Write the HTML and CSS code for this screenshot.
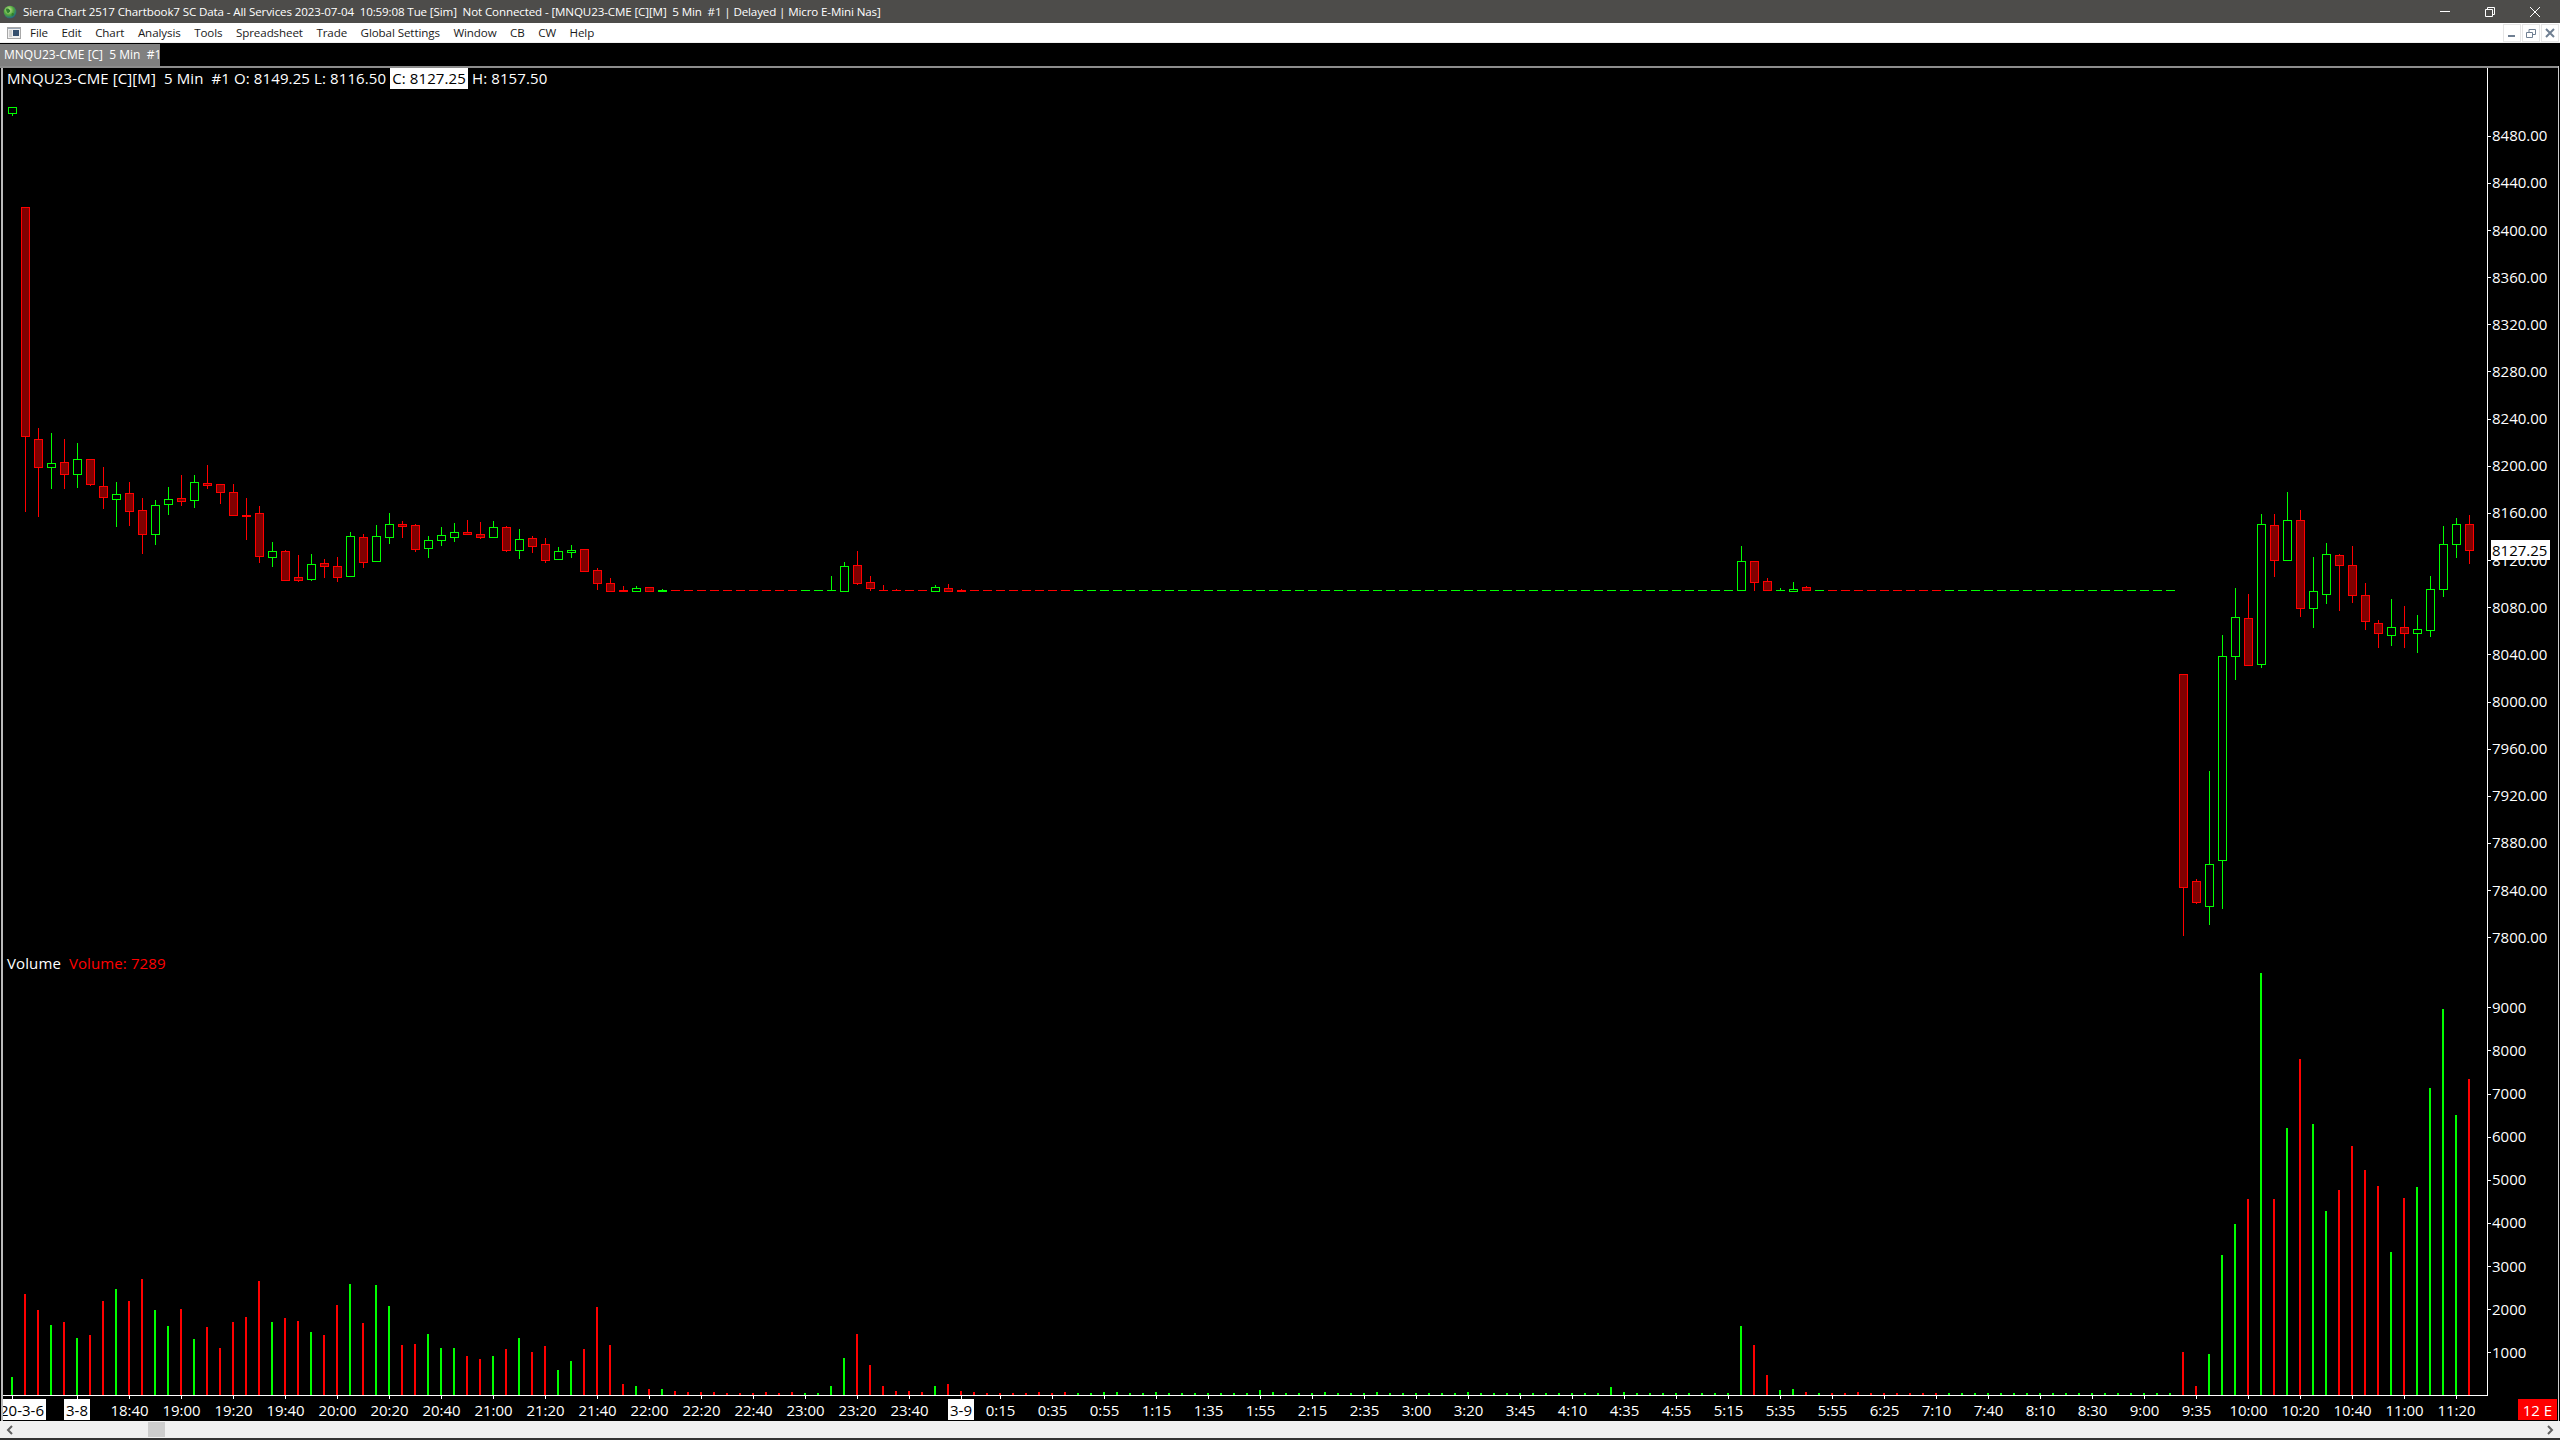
FILE: index.html
```html
<!DOCTYPE html>
<html lang="en">
<head>
<meta charset="utf-8">
<title>Sierra Chart</title>
<link rel="stylesheet" href="styles.css">
</head>
<body>
<div class="app">
  <header class="titlebar">
    <svg class="app-icon" viewBox="0 0 14 14" width="14" height="14"><defs><radialGradient id="globe" cx="40%" cy="35%" r="70%"><stop offset="0" stop-color="#d8f0a0"/><stop offset=".55" stop-color="#4fa53c"/><stop offset="1" stop-color="#1d5f8f"/></radialGradient></defs><circle cx="7" cy="7" r="6.3" fill="url(#globe)"/><path d="M3 4c2-1 3 0 4 1s-1 3-2 3-2-2-2-4zM9 8c1 0 2 0 2 1s-1 2-2 2 0-3 0-3z" fill="#2f7f2f"/></svg>
    <span class="title-text">Sierra Chart 2517 Chartbook7 SC Data - All Services 2023-07-04  10:59:08 Tue [Sim]  Not Connected - [MNQU23-CME [C][M]  5 Min  #1 | Delayed | Micro E-Mini Nas]</span>
    <div class="win-buttons">
      <svg class="win-btn" viewBox="0 0 12 12" width="12" height="12"><path d="M1 5.5h10" /></svg>
      <svg class="win-btn" viewBox="0 0 12 12" width="12" height="12"><path d="M1.5 3.5h7v7h-7zM3.5 3.500v-2h7v7h-2" /></svg>
      <svg class="win-btn" viewBox="0 0 12 12" width="12" height="12"><path d="M1 1l10 10M11 1L1 11" /></svg>
    </div>
  </header>
  <nav class="menubar">
    <svg class="doc-icon" viewBox="0 0 14 12" width="14" height="12"><rect x=".5" y=".5" width="13" height="11" fill="#f0f0f0" stroke="#a8a8a8"/><rect x="1" y="1" width="12" height="1" fill="#9aa6b4"/><rect x="6" y="3" width="6" height="6" fill="#36506e"/><rect x="2" y="3" width="3" height="7" fill="#d0d0d0"/></svg>
    <ul class="menu">
      <li>File</li><li>Edit</li><li>Chart</li><li>Analysis</li><li>Tools</li><li>Spreadsheet</li><li>Trade</li><li>Global Settings</li><li>Window</li><li>CB</li><li>CW</li><li>Help</li>
    </ul>
    <div class="mdi-buttons">
      <button class="mdi-btn"><svg viewBox="0 0 12 12" width="12" height="12"><path d="M2 8h7v2H2z"/></svg></button>
      <button class="mdi-btn"><svg viewBox="0 0 12 12" width="12" height="12"><path class="mdi-line" d="M1.500 5.500h6v5h-6zM4 5V2.500h6.500v5H8"/></svg></button>
      <button class="mdi-btn"><svg viewBox="0 0 12 12" width="12" height="12"><path class="mdi-x" d="M2 2l8 8M10 2l-8 8"/></svg></button>
    </div>
  </nav>
  <div class="tabbar">
    <div class="tab">MNQU23-CME [C]  5 Min  #1</div>
  </div>
  <main class="chart">
    <svg id="plot" class="plot" viewBox="0 66 2560 1355" width="2560" height="1355" preserveAspectRatio="none"></svg>
    <div class="legend legend-price">MNQU23-CME [C][M]  5 Min  #1 O: 8149.25 L: 8116.50 <span class="hl">C: 8127.25</span> H: 8157.50</div>
    <div class="legend legend-volume">Volume  <span class="red">Volume: 7289</span></div>
  </main>
  <div class="scrollbar">
    <svg class="arrow" viewBox="0 0 8 10" width="8" height="10"><path d="M6 1L2 5l4 4"/></svg>
    <div class="track"><div class="thumb"></div></div>
    <svg class="arrow" viewBox="0 0 8 10" width="8" height="10"><path d="M2 1l4 4-4 4"/></svg>
  </div>
  <div class="bottom-edge"></div>
</div>
<script src="chart.js"></script>
</body>
</html>
```

FILE: styles.css
```css
* { box-sizing: border-box; }
html, body { margin: 0; padding: 0; background: #000; }
body { font-family: "Open Sans", "Noto Sans", sans-serif; overflow: hidden; }
.app { width: 2560px; height: 1440px; display: flex; flex-direction: column; }

.titlebar { height: 23px; background: #4d4c4a; color: #fff; display: flex; align-items: center; padding-left: 3px; font-size: 11.6px; }
.app-icon { flex: none; margin-right: 6px; }
.title-text { white-space: pre; letter-spacing: -0.13px; }
.win-buttons { margin-left: auto; display: flex; gap: 33px; padding-right: 19px; }
.win-btn { fill: none; stroke: #fff; stroke-width: 1; }

.menubar { height: 20px; background: #fff; border-bottom: 1px solid #f0f0f0; display: flex; align-items: center; padding-left: 7px; color: #1a1a1a; font-size: 11.6px; letter-spacing: -0.1px; }
.doc-icon { flex: none; margin-right: 9px; }
.menu { list-style: none; margin: 0; padding: 0; display: flex; gap: 13.5px; }
.mdi-buttons { margin-left: auto; display: flex; gap: 1px; padding-right: 1px; }
.mdi-btn { width: 18px; height: 18px; padding: 0; background: #fff; border: 1px solid #e6e6e6; display: flex; align-items: center; justify-content: center; fill: #6f7f92; }
.mdi-line { fill: none; stroke: #6f7f92; stroke-width: 1; }
.mdi-x { fill: none; stroke: #6f7f92; stroke-width: 2; }

.tabbar { height: 23px; background: #000; padding-top: 1px; }
.tab { width: 160px; height: 22px; background: #808080; color: #fff; font-size: 12px; line-height: 22px; padding-left: 4px; white-space: pre; }

.chart { position: relative; flex: 1; background: #000; overflow: hidden; }
.plot { display: block; }
.legend { position: absolute; left: 7px; color: #fff; font-size: 15px; line-height: 21px; white-space: pre; letter-spacing: 0.11px; }
.legend-price { top: 2px; }
.legend-volume { top: 887px; }
.hl { background: #fff; color: #000; padding: 0 2px; display: inline-block; }
.red { color: #f00; }

.scrollbar { height: 17px; background: #f0f0f0; display: flex; align-items: center; padding: 0 6px; }
.arrow { flex: none; fill: none; stroke: #606060; stroke-width: 2; }
.track { flex: 1; height: 15px; padding-left: 134px; }
.thumb { width: 17px; height: 15px; background: #cdcdcd; }
.bottom-edge { height: 2px; background: #333; }

.frame { fill: #bbb; }
.frame-top { fill: #8c8c8c; }
.frame-right { fill: #ccc; }
.mask { fill: #000; }
.axis { fill: #fff; }
.wick-up, .flat-up { fill: #0f0; }
.wick-down, .flat-down { fill: #f00; }
.body-up { fill: #000; stroke: #0f0; }
.body-down { fill: #800000; stroke: #f00; }
.vol-up { fill: #0f0; }
.vol-down { fill: #f00; }
.plot text { font-family: "Open Sans", "Noto Sans", sans-serif; font-size: 15px; fill: #fff; dominant-baseline: central; }
.plot text.on-white { fill: #000; }
.label-bg { fill: #fff; }
.alert-bg { fill: #f00; }
.plot rect, .plot line { shape-rendering: crispEdges; }
```

FILE: chart.js
```js
// Geometry of the chart, in page pixels
var BAR0 = 12, STEP = 13, AXIS_X = 2487, AXIS_Y = 1395, FLAT = 590;
var NS = 'http://www.w3.org/2000/svg';
var svg = document.getElementById('plot');

function el(name, attrs, text) {
  var n = document.createElementNS(NS, name);
  for (var k in attrs) n.setAttribute(k, attrs[k]);
  if (text !== undefined) n.textContent = text;
  svg.appendChild(n);
  return n;
}
function rect(cls, x, y, w, h) { el('rect', { 'class': cls, x: x, y: y, width: w, height: h }); }
function barX(i) { return BAR0 + STEP * i; }

// Candles: colour, wick top, body top, body bottom, wick bottom; values are measured at 3x from base
var candles = {};
function addCandles(start, base, rows) {
  rows.forEach(function (r, n) {
    candles[start + n] = { c: r[0], v: [r[1], r[2], r[3], r[4]].map(function (p) { return Math.round(base + p / 3); }) };
  });
}
function addFlat(from, to, c) {
  for (var i = from; i <= to; i++) candles[i] = { c: c, v: [FLAT, FLAT, FLAT, FLAT] };
}
addCandles(0, 0, [['g', 321, 321, 339, 345]]);
addCandles(1, 190, [
  ['r', 52, 52, 737, 963], ['r', 714, 748, 832, 978], ['g', 729, 820, 832, 894], ['r', 747, 817, 851, 894],
  ['g', 759, 808, 851, 891], ['r', 808, 808, 881, 885], ['r', 831, 889, 920, 954], ['g', 876, 913, 926, 1008],
  ['r', 876, 910, 962, 1005], ['r', 924, 961, 1031, 1088], ['g', 930, 946, 1031, 1062], ['g', 891, 928, 943, 972],
  ['r', 855, 925, 932, 945], ['g', 855, 877, 929, 951], ['r', 825, 880, 884, 894], ['r', 883, 883, 905, 939],
  ['r', 882, 907, 976, 976], ['r', 924, 975, 977, 1047]
]);
addCandles(19, 500, [
  ['r', 18, 40, 167, 186], ['g', 126, 154, 170, 198], ['r', 150, 154, 239, 239], ['r', 165, 232, 239, 243],
  ['g', 162, 193, 236, 240], ['r', 177, 190, 197, 231]
]);
addCandles(25, 480, [
  ['r', 231, 259, 290, 302], ['g', 156, 169, 287, 287], ['r', 163, 172, 245, 261], ['g', 135, 169, 242, 242],
  ['g', 99, 133, 170, 189], ['r', 123, 132, 137, 171], ['r', 132, 136, 206, 213], ['g', 168, 181, 203, 231],
  ['g', 141, 166, 181, 195], ['g', 129, 157, 170, 183], ['r', 120, 157, 163, 163], ['r', 126, 163, 170, 174],
  ['g', 123, 142, 170, 170], ['r', 138, 142, 209, 213], ['g', 147, 178, 209, 234], ['r', 168, 175, 197, 216],
  ['r', 174, 193, 239, 246], ['g', 201, 214, 236, 236], ['g', 195, 211, 215, 231], ['r', 208, 208, 272, 272],
  ['r', 264, 271, 308, 327], ['r', 294, 310, 332, 332], ['r', 318, 330, 332, 332], ['g', 318, 325, 332, 332],
  ['r', 322, 322, 332, 332], ['g', 327, 330, 332, 332]
]);
addFlat(51, 60, 'r');
addFlat(61, 62, 'g');
addCandles(63, 500, [
  ['g', 228, 271, 271, 271], ['g', 186, 199, 272, 272], ['r', 153, 196, 248, 252], ['r', 228, 247, 263, 270],
  ['r', 255, 271, 271, 271], ['r', 268, 271, 271, 271], ['r', 271, 271, 271, 271], ['r', 271, 271, 271, 271],
  ['g', 255, 262, 272, 272], ['r', 252, 265, 272, 272], ['r', 267, 270, 272, 272]
]);
addFlat(74, 81, 'r');
addFlat(82, 132, 'g');
addCandles(133, 530, [
  ['g', 48, 94, 181, 181], ['r', 94, 94, 155, 180], ['r', 144, 154, 181, 181],
  ['g', 174, 181, 181, 181], ['g', 156, 177, 182, 182], ['r', 168, 172, 181, 181]
]);
addFlat(139, 139, 'g');
addFlat(140, 148, 'r');
addFlat(149, 166, 'g');
addCandles(167, 480, [
  ['r', 583, 583, 1220, 1365], ['r', 1197, 1204, 1265, 1268], ['g', 873, 1153, 1279, 1332], ['g', 465, 529, 1141, 1284],
  ['g', 324, 412, 529, 597], ['r', 342, 415, 556, 556], ['g', 102, 133, 553, 560], ['r', 102, 136, 241, 288],
  ['g', 36, 121, 241, 241], ['r', 90, 121, 385, 408], ['g', 231, 334, 385, 441], ['g', 189, 223, 343, 369],
  ['r', 222, 226, 256, 390], ['r', 198, 256, 346, 366], ['r', 309, 346, 424, 447], ['r', 420, 430, 460, 501],
  ['g', 357, 442, 466, 495], ['r', 378, 442, 460, 501], ['g', 405, 448, 460, 516], ['g', 288, 328, 451, 468],
  ['g', 138, 193, 328, 348], ['g', 114, 133, 193, 231], ['r', 105, 133, 211, 249]
]);

Object.keys(candles).forEach(function (k) {
  var i = +k, d = candles[k], x = barX(i), up = d.c === 'g', v = d.v;
  if (v[0] < v[3]) rect(up ? 'wick-up' : 'wick-down', x, v[0], 1, v[3] - v[0] + 1);
  if (v[2] - v[1] < 2) {
    rect(up ? 'flat-up' : 'flat-down', x - 4, v[1], 9, Math.max(1, v[2] - v[1] + 1));
  } else {
    rect(up ? 'body-up' : 'body-down', x - 3.5, v[1] + 0.5, 8, v[2] - v[1]);
  }
});

// Volume bars: colour letter plus the measured top of the bar
var volumes = {};
function addVolumes(start, zero, s) {
  s.split(' ').forEach(function (t, n) {
    volumes[start + n] = { c: t[0], h: Math.max(1, Math.round((zero - +t.slice(1)) / 3)) };
  });
}
addVolumes(0, 375, 'g321 r72 r120 g165 r156 g204 r195 r93 g57 r93 r27 g120 g168 r117 g207 r171 r234 r156 r141 r33 g156 r144 r153 g186 r195 r105 g42 r159 g45 g108 r225 r222 g192 g234 g234 r258 r267 g258 r237 g204 r246 r228 g300 g273 r237 r111 r225 r342 g348');
addVolumes(49, 375, 'r357 g357 r363 r366 r366 r366 r369 r370 r370 r366 r370 r366 g369 g369 g348 g264 r192 r285 r348 r363 r363 r366 g348 r342 r363 r366 r369 r370 r370 r370 r366 r370 r366 g369 g369 g366 g366 g369 g369 g366 g369 g369 g369 g369 g369 g369 g369 g360 g366');
addVolumes(98, 375, 'g369 g369 g369 g366 g369 g369 g369 g366 g369 g369 g369 g369 g369 g369 g366 g369 g369 g369 g369 g369 g369 g369 g369 g369 g369 g351 g366 g369 g369 g369 g369 g369 g369 g369 g369');
addVolumes(133, 375, 'g168 r225 r315 g360 g357 r366 g369 r369 r369 r366 r369 r369 r369 r369 r369 r369 g369 g369 g369 g369 g369 g369 g369 g369 g369 g369 g369 g369 g369 g369 g369 g369 g369 g369');
addVolumes(167, 1305, 'r1176 r1278 g1182 g885 g792 r717 g39 r717 g504 r297 g492 g753 r690 r558 r630 r678 g876 r714 g681 g384 g147 g465 r357');
Object.keys(volumes).forEach(function (k) {
  var d = volumes[k];
  rect(d.c === 'g' ? 'vol-up' : 'vol-down', barX(+k) - 1, AXIS_Y - d.h, 2, d.h);
});

// Axes
rect('axis', AXIS_X, 68, 1, AXIS_Y - 67);
rect('axis', 3, AXIS_Y, AXIS_X - 3, 1);

// Price scale
for (var p = 8480; p >= 7800; p -= 40) {
  var py = 135.7 + (8480 - p) * 1.17875;
  rect('axis', AXIS_X, Math.round(py), 4, 1);
  el('text', { x: 2492, y: py - 0.5 }, p.toFixed(2));
}
// Current price
rect('label-bg', 2491, 540, 59, 20);
el('text', { 'class': 'on-white', x: 2492, y: 550 }, '8127.25');

// Volume scale
for (var m = 1; m <= 9; m++) {
  var vy = 1395.4 - m * 43.12;
  rect('axis', AXIS_X, Math.round(vy), 4, 1);
  el('text', { x: 2492, y: vy - 0.5 }, String(m * 1000));
}

// Time scale
function tick(i) { rect('axis', barX(i), AXIS_Y + 1, 1, 3); }
function dateLabel(i, x, w, t) {
  tick(i);
  rect('label-bg', x, 1399, w, 21);
  el('text', { 'class': 'on-white', x: x + w / 2, y: 1410, 'text-anchor': 'middle' }, t);
}
function timeLabel(i, t) {
  tick(i);
  el('text', { x: barX(i) + 0.5, y: 1410, 'text-anchor': 'middle' }, t);
}
rect('label-bg', 3, 1399, 43, 21);
tick(0);
el('text', { 'class': 'on-white', x: 44, y: 1410, 'text-anchor': 'end' }, '20-3-6');
dateLabel(5, 64, 26, '3-8');
dateLabel(73, 948, 26, '3-9');
['18:40', '19:00', '19:20', '19:40', '20:00', '20:20', '20:40', '21:00', '21:20', '21:40', '22:00', '22:20', '22:40', '23:00', '23:20', '23:40']
  .forEach(function (t, n) { timeLabel(9 + 4 * n, t); });
['0:15', '0:35', '0:55', '1:15', '1:35', '1:55', '2:15', '2:35', '3:00', '3:20', '3:45', '4:10', '4:35', '4:55', '5:15', '5:35', '5:55', '6:25', '7:10', '7:40', '8:10', '8:30', '9:00', '9:35', '10:00', '10:20', '10:40', '11:00', '11:20']
  .forEach(function (t, n) { timeLabel(76 + 4 * n, t); });

rect('alert-bg', 2518, 1399, 39, 21);
el('text', { x: 2537.5, y: 1410, 'text-anchor': 'middle' }, '12 E');

// Frame, drawn last so it clips the first date label
rect('mask', 0, 1396, 3, 25);
rect('frame', 1, 67, 2, 1354);
rect('frame-top', 0, 66, 2559, 2);
rect('frame-right', 2558, 66, 1, 1355);
```
